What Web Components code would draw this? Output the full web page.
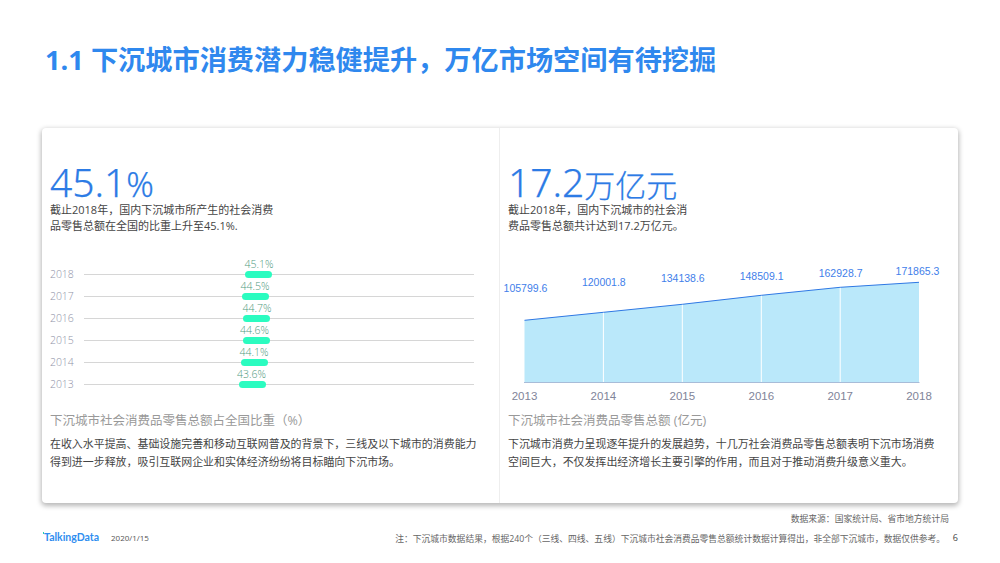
<!DOCTYPE html>
<html lang="zh-CN"><head><meta charset="utf-8"><title>下沉城市</title>
<style>
html,body{margin:0;padding:0;background:#fff}
body{width:1000px;height:563px;overflow:hidden;font-family:"Open Sans","Noto Sans CJK SC",sans-serif}
</style></head><body>
<report-slide>
  <span slot="title">1.1 下沉城市消费潜力稳健提升&#xFF0C;万亿市场空间有待挖掘</span>
  <stat-panel slot="left" value="45.1" unit="%" style="--unit-size:34px;--text-w:228px;--chart-h:151px;--cap-size:12.5px">
    <span slot="desc">截止2018年&#xFF0C;国内下沉城市所产生的社会消费<br>品零售总额在全国的比重上升至45.1%.</span>
    <bar-chart slot="chart"></bar-chart>
    <span slot="caption">下沉城市社会消费品零售总额占全国比重&#xFF08;%&#xFF09;</span>
    <span slot="body">在收入水平提高、基础设施完善和移动互联网普及的背景下&#xFF0C;三线及以下城市的消费能力<br>得到进一步释放&#xFF0C;吸引互联网企业和实体经济纷纷将目标瞄向下沉市场。</span>
  </stat-panel>
  <stat-panel slot="right" value="17.2" unit="万亿元" style="--unit-size:31px;--text-w:190px;--chart-h:151px;--cap-size:12.5px">
    <span slot="desc">截止2018年&#xFF0C;国内下沉城市的社会消<br>费品零售总额共计达到17.2万亿元。</span>
    <area-chart slot="chart"></area-chart>
    <span slot="caption">下沉城市社会消费品零售总额 (亿元)</span>
    <span slot="body">下沉城市消费力呈现逐年提升的发展趋势&#xFF0C;十几万社会消费品零售总额表明下沉市场消费<br>空间巨大&#xFF0C;不仅发挥出经济增长主要引擎的作用&#xFF0C;而且对于推动消费升级意义重大。</span>
  </stat-panel>
  <span slot="source">数据来源&#xFF1A;国家统计局、省市地方统计局</span>
  <span slot="date">2020/1/15</span>
  <span slot="note">注&#xFF1A;下沉城市数据结果&#xFF0C;根据240个&#xFF08;三线、四线、五线&#xFF09;下沉城市社会消费品零售总额统计数据计算得出&#xFF0C;非全部下沉城市&#xFF0C;数据仅供参考。</span>
  <span slot="page">6</span>
</report-slide>
<script>
function def(name,html,init){
  customElements.define(name,class extends HTMLElement{
    connectedCallback(){
      if(this.shadowRoot)return;
      const r=this.attachShadow({mode:'open'});
      r.innerHTML=html;
      if(init)init(r,this);
    }
  });
}
def('report-slide',`<style>
:host{display:flex;flex-direction:column;width:1000px;height:563px;box-sizing:border-box;padding:0 42px}
h1{margin:0;height:128px;box-sizing:border-box;padding:41px 0 0 3px;font:700 27.2px/38px "Open Sans","Noto Sans CJK SC",sans-serif;color:#2f88ee;white-space:nowrap}
.card{display:grid;grid-template-columns:458px 458px;height:375px;background:#fff;border-radius:4px;box-shadow:0 2px 5px 1px rgba(0,0,0,.28)}
.left{border-right:1px solid #eeeeee}
.src{display:flex;justify-content:flex-end;padding:10px 9px 0 0;font-size:8.8px;line-height:12px;color:#666}
.foot{display:flex;align-items:center;margin-top:6px;height:14px;font-size:8.8px;color:#666}
.date{position:relative;top:-1px;margin-left:12px;color:#555;font-size:8px}
.logo{position:relative;margin-left:2px;font:700 10.5px/14px "Lato",sans-serif;color:#2f8ef0;width:55px;white-space:nowrap;top:-1px}
.logo::before{content:"";position:absolute;left:-1px;top:2px;width:1px;height:2px;background:#25d0b0}
.note{margin-left:auto;margin-right:4px;white-space:nowrap;font-size:8.77px}
.pg{width:9px;text-align:right;font-size:9px;color:#444;position:relative;top:-1px}
</style>
<h1><slot name="title"></slot></h1>
<div class="card"><div class="left"><slot name="left"></slot></div><div><slot name="right"></slot></div></div>
<div class="src"><slot name="source"></slot></div>
<div class="foot"><span class="logo">TalkingData</span><span class="date"><slot name="date"></slot></span><span class="note"><slot name="note"></slot></span><span class="pg"><slot name="page"></slot></span></div>`);

def('stat-panel',`<style>
:host{display:flex;flex-direction:column;height:100%;box-sizing:border-box;padding:34px 8px 0 8px}
.num{height:39.5px;font:300 39px/39.5px "Noto Sans","Noto Sans CJK SC",sans-serif;color:#2c7be5;white-space:nowrap;-webkit-text-stroke:.25px #2c7be5}
.unit{font-size:var(--unit-size)}
.desc{width:var(--text-w);font-size:11px;line-height:16.5px;color:#444;white-space:nowrap}
.chart{height:var(--chart-h);margin-top:20.5px}
.cap{margin-top:6px;font-size:var(--cap-size);line-height:18px;color:#999;white-space:nowrap}
.body{margin-top:5px;font-size:10.95px;line-height:18px;color:#444;white-space:nowrap}
</style>
<div class="num" id="n"></div>
<div class="desc"><slot name="desc"></slot></div>
<div class="chart"><slot name="chart"></slot></div>
<div class="cap"><slot name="caption"></slot></div>
<div class="body"><slot name="body"></slot></div>`,(r,h)=>{
  r.getElementById('n').innerHTML=h.getAttribute('value')+'<span class="unit">'+h.getAttribute('unit')+'</span>';
});

def('bar-chart',`<style>
:host{display:flex;flex-direction:column;height:100%;font-family:"Open Sans","Noto Sans CJK SC",sans-serif}
#w{padding-top:8.5px}
.row{position:relative;display:flex;align-items:center;height:22px}
.yr{width:34px;font-size:10.5px;font-weight:300;line-height:20px;margin-top:-2px;color:#8f93a8;letter-spacing:-.1px}
.line{width:390px;height:1px;background:#d6d6d6}
.bar{position:absolute;top:7.5px;height:7px;width:27px;border-radius:3.5px;background:#2bfcc0}
.v{position:absolute;top:-7px;width:40px;text-align:center;font-size:10.5px;font-weight:300;line-height:14px;color:#4f9a80}
</style><div id="w"></div>`,(r)=>{
  const d=[['2018',195,'45.1%',209],['2017',192,'44.5%',205],['2016',193,'44.7%',207],['2015',193,'44.6%',204.5],['2014',191,'44.1%',204],['2013',189,'43.6%',201.5]];
  r.getElementById('w').innerHTML=d.map(x=>`<div class="row"><span class="yr">${x[0]}</span><span class="line"></span><span class="bar" style="left:${x[1]}px"></span><span class="v" style="left:${x[3]-20}px">${x[2]}</span></div>`).join('');
});

def('area-chart',`<style>
:host{display:block;height:100%}
svg{display:block;overflow:visible}
text{font-family:"Liberation Sans",sans-serif}
</style><svg id="s" width="450" height="151" viewBox="508 255 450 151"></svg>`,(r)=>{
  const xs=[524.5,603.4,682.3,761.3,840.2,919];
  const ys=[320.3,312.3,304.3,295.3,287.3,282.3];
  const vals=['105799.6','120001.8','134138.6','148509.1','162928.7','171865.3'];
  const lx=[525.5,603.8,682.8,761.6,840.6,917.5];
  const ly=[292,285.5,282,280,277,275];
  const yrs=['2013','2014','2015','2016','2017','2018'];
  const pts=xs.map((x,i)=>x+','+ys[i]).join(' ');
  let s=`<polygon points="524.5,382.3 ${pts} 919,382.3" fill="#bae8fa"/>`;
  for(let i=1;i<5;i++)s+=`<line x1="${xs[i]}" x2="${xs[i]}" y1="${ys[i]}" y2="382" stroke="#fff" stroke-width="1"/>`;
  s+=`<line x1="524" x2="919.5" y1="382.5" y2="382.5" stroke="#a8bcd8" stroke-width="1"/>`;
  s+=`<polyline points="${pts}" fill="none" stroke="#2f78e4" stroke-width="1"/>`;
  xs.forEach((x,i)=>{
    s+=`<text x="${lx[i]}" y="${ly[i]}" text-anchor="middle" font-size="10.5" fill="#3f80ea">${vals[i]}</text>`;
    s+=`<text x="${x}" y="400" text-anchor="middle" font-size="11.5" fill="#7f8499">${yrs[i]}</text>`;
  });
  r.getElementById('s').innerHTML=s;
});
</script>
</body></html>
